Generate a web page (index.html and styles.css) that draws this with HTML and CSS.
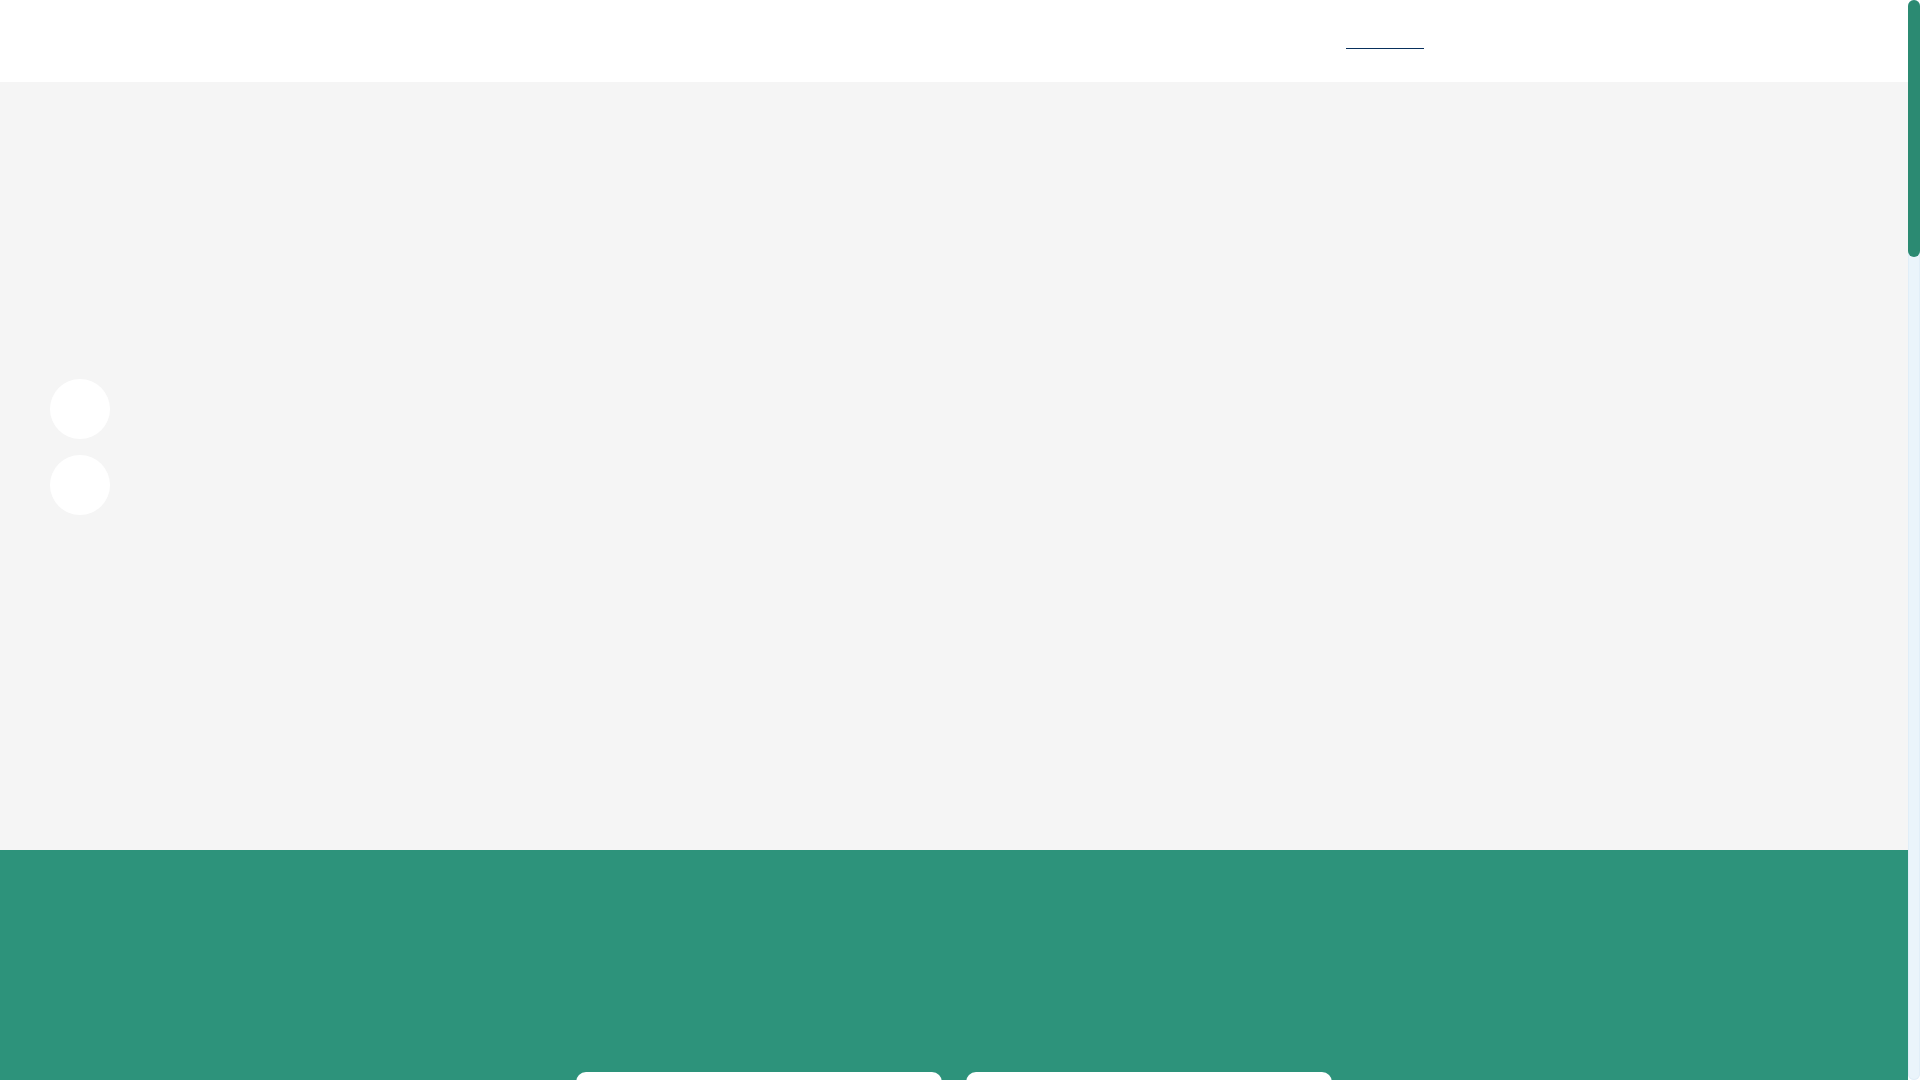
FILE: index.html
```html
<!DOCTYPE html>
<html lang="en">
<head>
<meta charset="utf-8">
<title>Page</title>
<link rel="stylesheet" href="styles.css">
</head>
<body>
<main class="page">
  <header class="site-header">
    <nav class="nav">
      <span class="nav-link active"></span>
    </nav>
  </header>
  <section class="hero">
    <div class="hero-controls">
      <button class="hero-dot" aria-label="previous"></button>
      <button class="hero-dot" aria-label="next"></button>
    </div>
  </section>
  <section class="features">
    <div class="cards">
      <div class="card"></div>
      <div class="card"></div>
    </div>
  </section>
  <section class="filler"></section>
</main>
<div class="scroll-rail" aria-hidden="true">
  <div class="scroll-thumb"></div>
</div>
</body>
</html>
```
FILE: styles.css
```css
html {
  background: #ffffff;
}
body {
  margin: 0;
  font-family: "Liberation Sans", Arial, sans-serif;
}
html::-webkit-scrollbar {
  display: none;
}
.page {
  margin-right: 12px;
}
.scroll-rail {
  position: fixed;
  top: 0;
  right: 0;
  width: 12px;
  height: 100vh;
  background: #eaf4fb;
  border-radius: 6px;
  box-shadow: inset 0 0 0 1px #e1eef8;
  display: flex;
  flex-direction: column;
}
.scroll-thumb {
  height: 257px;
  background: #2b8a72;
  border-radius: 6px;
}
.site-header {
  height: 82px;
  background: #ffffff;
  display: flex;
  align-items: flex-start;
}
.nav {
  display: flex;
  padding-left: 1346px;
  padding-top: 48px;
}
.nav-link {
  display: block;
  width: 78px;
  height: 0;
  border-bottom: 1px solid #08305c;
}
.hero {
  height: 768px;
  background: #f5f5f5;
  display: flex;
  flex-direction: column;
  padding-left: 50px;
  box-sizing: border-box;
}
.hero-controls {
  display: flex;
  flex-direction: column;
  gap: 16px;
  padding-top: 297px;
}
.hero-dot {
  width: 60px;
  height: 60px;
  border-radius: 50%;
  border: none;
  background: #ffffff;
  padding: 0;
}
.features {
  background: #2d937b;
  padding-top: 222px;
  padding-bottom: 200px;
}
.cards {
  display: flex;
  justify-content: center;
  gap: 24px;
}
.card {
  width: 366px;
  height: 420px;
  background: #ffffff;
  border-radius: 10px;
}
.filler {
  height: 2800px;
  background: #ffffff;
}
```
